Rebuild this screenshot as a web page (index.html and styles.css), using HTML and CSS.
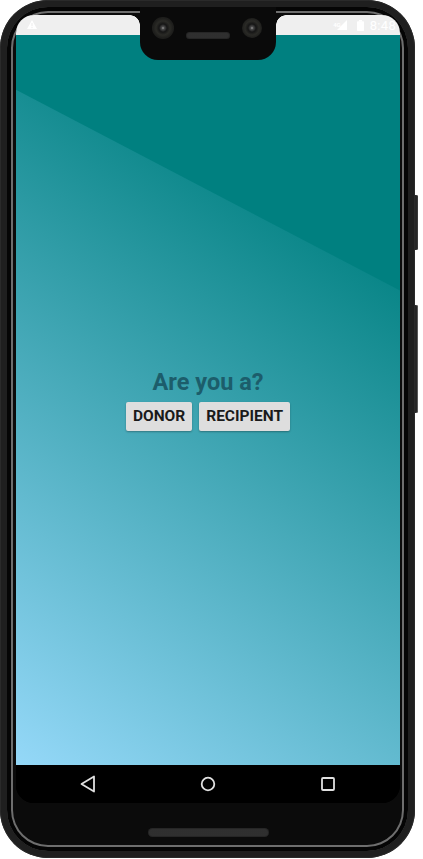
FILE: index.html
```html
<!DOCTYPE html>
<html lang="en">
<head>
<meta charset="utf-8">
<title>Are you a?</title>
<link rel="stylesheet" href="styles.css">
</head>
<body>
<div class="phone">
  <div class="side-btn side-btn-power"></div>
  <div class="side-btn side-btn-volume"></div>
  <div class="rim">
    <div class="screen">
      <div class="status-bar">
        <svg class="warn" width="10" height="9" viewBox="0 0 10 9"><path d="M5 0 L10 9 L0 9 Z" fill="#fff"/><rect x="4.4" y="3" width="1.2" height="3.2" fill="#efefef"/><rect x="4.4" y="7" width="1.2" height="1.1" fill="#efefef"/></svg>
        <div class="status-right">
          <span class="net">4G</span>
          <svg width="10" height="10" viewBox="0 0 10 10"><path d="M10 0 L10 10 L0 10 Z" fill="#fff"/></svg>
          <svg class="battery" width="7" height="11" viewBox="0 0 7 11"><rect x="2" y="0" width="3" height="1.5" fill="#fff"/><rect x="0" y="1.2" width="7" height="9.8" rx="0.8" fill="#fff"/></svg>
          <span class="clock">8:48</span>
        </div>
      </div>
      <main class="content">
        <div class="bg-slash"></div>
        <div class="question">
          <h1 class="title">Are you a?</h1>
          <div class="choices">
            <button class="choice">DONOR</button>
            <button class="choice">RECIPIENT</button>
          </div>
        </div>
      </main>
      <nav class="nav-bar">
        <svg width="16" height="18" viewBox="0 0 16 18"><path d="M14 1.5 L14 16.5 L1.5 9 Z" fill="none" stroke="#e0e0e0" stroke-width="1.8" stroke-linejoin="round"/></svg>
        <svg width="16" height="16" viewBox="0 0 16 16"><circle cx="8" cy="8" r="6.3" fill="none" stroke="#e0e0e0" stroke-width="1.8"/></svg>
        <svg width="16" height="16" viewBox="0 0 16 16"><rect x="2" y="2" width="12" height="12" rx="1" fill="none" stroke="#e0e0e0" stroke-width="1.8"/></svg>
      </nav>
    </div>
    <div class="chin">
      <div class="speaker speaker-bottom"></div>
    </div>
  </div>
  <div class="notch">
    <div class="camera camera-left"></div>
    <div class="speaker speaker-top"></div>
    <div class="camera camera-right"></div>
  </div>
</div>
</body>
</html>
```

FILE: styles.css
```css
html, body {
  margin: 0;
  padding: 0;
  background: #ffffff;
}

body {
  width: 423px;
  height: 859px;
  overflow: hidden;
  font-family: Roboto, "Noto Sans", "Liberation Sans", sans-serif;
}

.phone {
  position: relative;
  width: 415px;
  height: 858px;
  box-sizing: border-box;
  padding: 7px;
  border-radius: 48px;
  background: #1f1f1f;
  box-shadow: inset 0 0 0 1px #2a2a2a;
}

.side-btn {
  position: absolute;
  right: -3px;
  width: 3px;
  background: #262626;
  border-radius: 0 2px 2px 0;
  box-shadow: inset -1px 0 0 #3a3a3a;
}

.side-btn-power {
  top: 195px;
  height: 55px;
}

.side-btn-volume {
  top: 305px;
  height: 108px;
  box-shadow: inset -1px 0 0 #5a5a5a;
}

.rim {
  height: 100%;
  box-sizing: border-box;
  padding: 8px 8px 0 9px;
  border-radius: 41px;
  background: #0b0b0b;
  box-shadow: inset 0 0 0 4px #050505, inset 0 0 0 6px #6e6e6e;
  display: flex;
  flex-direction: column;
}

.screen {
  height: 788px;
  flex: none;
  display: flex;
  flex-direction: column;
  border-radius: 18px 18px 18px 18px;
  overflow: hidden;
  background: #000;
}

.status-bar {
  height: 20px;
  flex: none;
  background: #efefef;
  display: flex;
  align-items: center;
  justify-content: space-between;
  padding: 0 4px 0 11px;
}

.status-bar .warn {
  margin-top: -1px;
}

.status-right {
  display: flex;
  align-items: center;
  color: #fff;
}

.status-right .net {
  font-size: 6px;
  font-weight: 700;
  align-self: flex-start;
  margin-top: 3px;
  margin-right: -4px;
}

.status-right .battery {
  margin-left: 10px;
}

.status-right .clock {
  margin-left: 6px;
  font-size: 13px;
  letter-spacing: 0.3px;
}

.content {
  position: relative;
  flex: 1;
  display: flex;
  align-items: center;
  justify-content: center;
  background: linear-gradient(35deg, #95d8f8 0%, #008080 80%);
}

.bg-slash {
  position: absolute;
  inset: 0;
  background: #008080;
  clip-path: polygon(0 0, 100% 0, 100% 35%, 0 7.5%);
}

.question {
  position: relative;
  display: flex;
  flex-direction: column;
  align-items: center;
  gap: 7px;
  margin-top: 1px;
}

.title {
  margin: 0;
  font-size: 23.5px;
  line-height: 25px;
  font-weight: 700;
  color: #1c5d6b;
}

.choices {
  display: flex;
  gap: 7px;
}

.choice {
  height: 29px;
  padding: 0 7px;
  border: none;
  border-radius: 2px;
  background: #dedede;
  box-shadow: 0 1px 2px rgba(0, 0, 0, 0.3);
  font-family: Roboto, "Noto Sans", sans-serif;
  font-size: 15.5px;
  font-weight: 700;
  color: #1a1a1a;
  line-height: 29px;
}

.nav-bar {
  height: 38px;
  flex: none;
  background: #000;
  display: flex;
  align-items: center;
  gap: 104px;
  padding: 0 0 0 63.5px;
}

.chin {
  flex: 1;
  display: flex;
  justify-content: center;
}

.speaker {
  border-radius: 5px;
  background-color: #1b1b1b;
  background-image: radial-gradient(circle, #3a3a3a 0.6px, transparent 0.9px);
  background-size: 2px 2px;
  box-shadow: inset 0 0 0 1px #262626;
}

.speaker-bottom {
  width: 121px;
  height: 9px;
  margin-top: 25px;
}

.notch {
  position: absolute;
  left: 140px;
  top: 7px;
  width: 136px;
  height: 53px;
  background: #0a0a0a;
  border-radius: 0 0 18px 18px;
}

.notch::before,
.notch::after {
  content: "";
  position: absolute;
  top: 8px;
  width: 10px;
  height: 10px;
}

.notch::before {
  left: -10px;
  background: radial-gradient(circle at 0 100%, transparent 9.5px, #0a0a0a 10px);
}

.notch::after {
  right: -10px;
  background: radial-gradient(circle at 100% 100%, transparent 9.5px, #0a0a0a 10px);
}

.camera {
  position: absolute;
  border-radius: 50%;
  background: radial-gradient(circle at 50% 50%, #9a9a9a 0, #4a4a4a 1.5px, #151515 4px, #2a2a26 7px, #1e1e1c 10px);
}

.camera-left {
  left: 12px;
  width: 22px;
  height: 22px;
  top: 10px;
}

.camera-right {
  left: 102px;
  width: 20px;
  height: 20px;
  top: 11px;
}

.speaker-top {
  position: absolute;
  left: 46px;
  top: 25px;
  width: 44px;
  height: 7px;
  border-radius: 4px;
}
```
